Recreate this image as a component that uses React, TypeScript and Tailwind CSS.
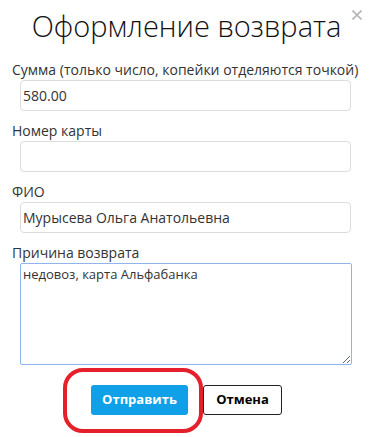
const fields = [
  { label: 'Сумма (только число, копейки отделяются точкой)', value: '580.00' },
  { label: 'Номер карты', value: '' },
  { label: 'ФИО', value: 'Мурысева Ольга Анатольевна' },
];

const App = () => {
  return (
    <div className="relative w-[379px] h-[437px] bg-white text-[#333] font-['Open_Sans',sans-serif] overflow-hidden">
      {/* Close */}
      <button className="absolute left-[352px] top-[10px] w-[10px] h-[10px]" aria-label="Закрыть">
        <svg viewBox="0 0 10 10" className="w-[10px] h-[10px]" stroke="#b5b5b5" strokeWidth="1.6">
          <path d="M0.5 0.5L9.5 9.5M9.5 0.5L0.5 9.5" />
        </svg>
      </button>

      {/* Title */}
      <h1 className="pt-[7px] pr-[6px] text-center text-[29px] leading-[38px] font-light text-[#111]">
        Оформление возврата
      </h1>

      <div className="pl-[12px] pt-[15px]">
        {fields.map(field => (
          <div key={field.label} className="mb-[10px]">
            <label className="block text-[14px] leading-[20px]">{field.label}</label>
            <input
              defaultValue={field.value}
              className="block ml-[8px] w-[331px] h-[31px] px-[2px] text-[14px] text-[#333] border border-[#ddd] rounded-[4px] outline-none"
            />
          </div>
        ))}

        <div>
          <label className="block text-[14px] leading-[20px]">Причина возврата</label>
          <textarea
            defaultValue="недовоз, карта Альфабанка"
            className="block ml-[8px] w-[332px] h-[102px] px-[2px] py-[1px] text-[13px] text-[#333] border border-[#8fb4ee] rounded-[2px] outline-none"
          />
        </div>

        {/* Actions */}
        <div className="flex items-center gap-[15px] pl-[79px] mt-[20px]">
          <button className="w-[97px] h-[30px] rounded-[3px] bg-[#0fa0e8] text-white text-[13px] font-bold">
            Отправить
          </button>
          <button className="w-[79px] h-[30px] rounded-[3px] border border-[#222] bg-white text-black text-[13px] font-bold">
            Отмена
          </button>
        </div>
      </div>

      {/* Annotation */}
      <div className="absolute left-[63px] top-[368px] w-[140px] h-[65px] border-[4px] border-[#e5202b] rounded-[20px]" />
    </div>
  );
};

export default App;
